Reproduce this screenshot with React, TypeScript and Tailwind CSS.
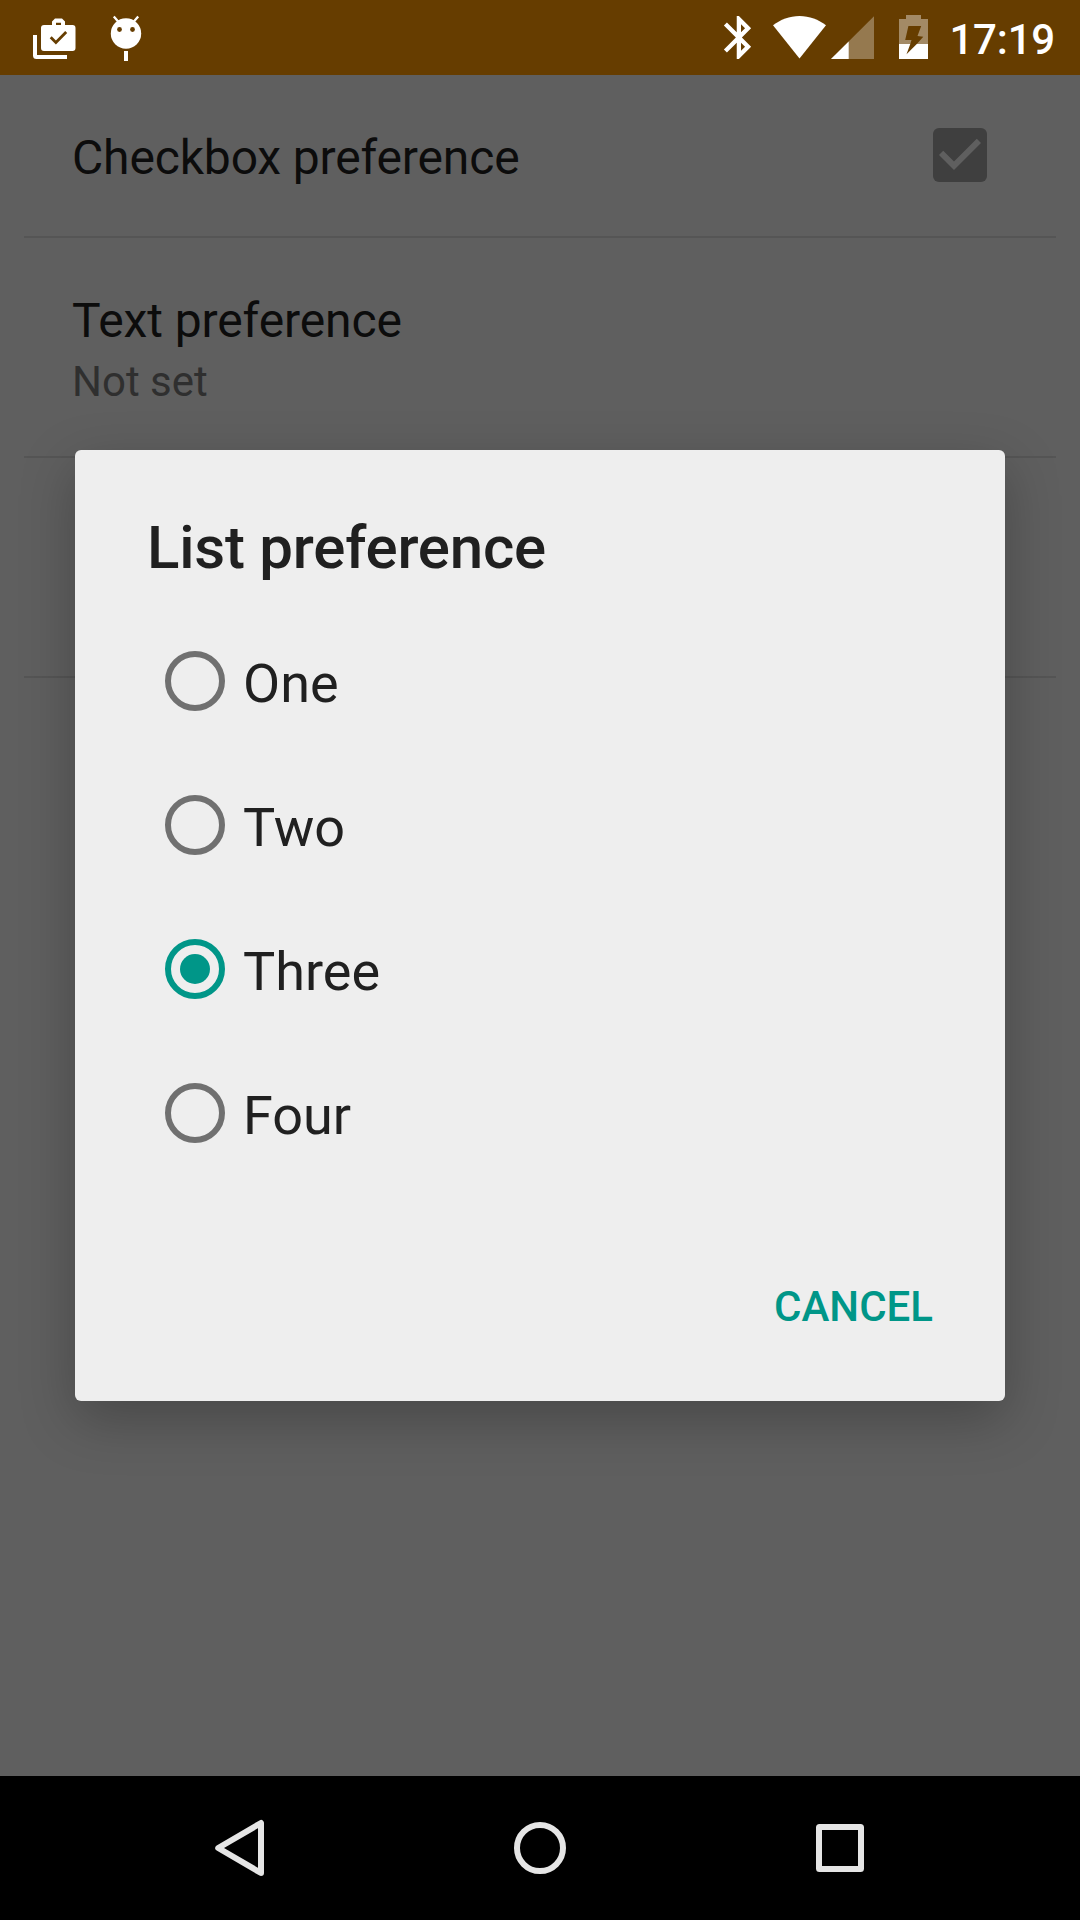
const WHITE = "#ffffff";

function StatusBar() {
  return (
    <header className="flex h-[75px] shrink-0 items-center justify-between bg-[#663d00] pl-[33px] pr-[25px] text-white">
      <div className="flex h-full items-start">
        <svg className="h-[75px] w-[43px]" viewBox="33 0 43 75">
          <path d="M33 35h4v20h30v4H36.500a3.500 3.500 0 0 1-3.500-3.500z" fill={WHITE} />
          <path
            fillRule="evenodd"
            d="M44 25h8v-3.500l3-3h7l3 3V25h7.500a3 3 0 0 1 3 3v20a3 3 0 0 1-3 3H44a3 3 0 0 1-3-3V28a3 3 0 0 1 3-3zM56 25h5v-2.300h-5z"
            fill={WHITE}
          />
          <path d="M50.700 37.200l5.200 5.200 10.300-10.500" fill="none" stroke="#663d00" strokeWidth="2.800" />
        </svg>
        <svg className="ml-[34px] h-[75px] w-[32px]" viewBox="110 0 32 75">
          <circle cx="126" cy="33.500" r="15.200" fill={WHITE} />
          <path d="M113.800 16.500l5.200 6M138.200 16.500l-5.200 6" stroke={WHITE} strokeWidth="2.300" />
          <circle cx="119.500" cy="29.500" r="2.400" fill="#663d00" />
          <circle cx="132.500" cy="29.500" r="2.400" fill="#663d00" />
          <path d="M124 51h4v10h-4z" fill={WHITE} />
        </svg>
      </div>
      <div className="flex h-full w-[335px] items-start justify-between">
        <svg className="h-[75px] w-[210px]" viewBox="720 0 210 75">
          <path
            transform="translate(713.200 11.800) scale(2.140)"
            fill={WHITE}
            d="M17.710 7.710L12 2h-1v7.590L6.410 5 5 6.410 10.590 12 5 17.590 6.410 19 11 14.410V22h1l5.710-5.710-4.300-4.290 4.300-4.290zM13 5.830l1.880 1.880L13 9.590V5.830zm1.880 10.460L13 18.170v-3.760l1.880 1.880z"
          />
          <path d="M773 25.300C780.500 19.600 789.500 16 799.500 16S818.500 19.600 826 25.300L799.500 58.600z" fill={WHITE} />
          <path d="M831 59L874 16.200V59z" fill={WHITE} fillOpacity="0.31" />
          <path d="M831 59L848.700 41.400V59z" fill={WHITE} />
          <path
            d="M899 44V19h7v-4h15v4h7v25h-11.200l6.500-7.300-5.800-.7 3.700-10h-12.800l-3.200 14h6.300l-1.200 4z"
            fill={WHITE}
            fillOpacity="0.4"
          />
          <path d="M899 44h11.300L906.500 54.300 916.800 44H928v15h-29z" fill={WHITE} />
        </svg>
        <span className="mt-[15px] text-[42px] font-medium leading-[50px] tracking-[-0.2px]">17:19</span>
      </div>
    </header>
  );
}

function Preferences() {
  return (
    <main className="flex flex-1 flex-col bg-[#5f5f5f] px-6 text-[#0c0c0c]">
      <div className="flex h-[163px] items-start justify-between border-b-2 border-[#555555] pl-12 pr-[60px]">
        <span className="mt-[55px] text-[48px] leading-[56px] tracking-[-0.15px]">Checkbox preference</span>
        <svg className="mt-[44px] size-[72px]" viewBox="0 0 24 24">
          <rect x="3" y="3" width="18" height="18" rx="2" fill="#3f3f3f" />
          <path d="M10 17l-5-5 1.410-1.410L10 14.170l7.590-7.590L19 8z" fill="#5f5f5f" />
        </svg>
      </div>
      <div className="flex h-[220px] flex-col border-b-2 border-[#555555] pl-12 pt-[55px]">
        <span className="text-[48px] leading-[56px] tracking-[-0.1px]">Text preference</span>
        <span className="mt-[8px] text-[42px] leading-[50px] text-[#2f2f2f]">Not set</span>
      </div>
      <div className="h-[220px] border-b-2 border-[#555555]" />
    </main>
  );
}

function Radio({ label, selected = false }: { label: string; selected?: boolean }) {
  return (
    <label className="flex h-[144px] items-center">
      <span
        className={
          selected
            ? "flex size-[60px] items-center justify-center rounded-full border-[6px] border-[#009688]"
            : "flex size-[60px] items-center justify-center rounded-full border-[6px] border-[#707070]"
        }
      >
        {selected && <span className="size-[30px] rounded-full bg-[#009688]" />}
      </span>
      <span className="ml-[18px] mt-[6px] text-[54px] leading-[64px]">{label}</span>
    </label>
  );
}

function ListDialog() {
  return (
    <section
      role="dialog"
      className="absolute left-[75px] top-[450px] flex h-[951px] w-[930px] flex-col rounded-[6px] bg-[#eeeeee] text-[#202020] shadow-[0_18px_54px_rgba(0,0,0,0.25)]"
    >
      <h1 className="ml-[72px] mt-[63px] text-[60px] font-medium leading-[70px] tracking-[-0.22px]">List preference</h1>
      <div className="ml-[90px] mt-[26px] flex flex-col">
        <Radio label="One" />
        <Radio label="Two" />
        <Radio label="Three" selected />
        <Radio label="Four" />
      </div>
      <button className="mr-[72px] mt-[97px] self-end text-[42px] font-medium leading-[50px] text-[#009688]">
        CANCEL
      </button>
    </section>
  );
}

function NavigationBar() {
  return (
    <nav className="z-10 flex h-36 shrink-0 items-center justify-between bg-black px-[204px]">
      <svg className="size-[72px]" viewBox="204 1812 72 72" fill="none" stroke="#e5e5e5" strokeWidth="6" strokeLinejoin="round">
        <path d="M261 1823V1873L218.200 1848z" />
      </svg>
      <svg className="size-[72px]" viewBox="0 0 72 72" fill="none" stroke="#e5e5e5" strokeWidth="6">
        <circle cx="36" cy="36" r="23" />
      </svg>
      <svg className="size-[72px]" viewBox="0 0 72 72" fill="none" stroke="#e5e5e5" strokeWidth="6" strokeLinejoin="round">
        <rect x="15" y="15" width="42" height="42" rx="0.500" />
      </svg>
    </nav>
  );
}

export default function App() {
  return (
    <div className="relative flex h-[1920px] w-[1080px] flex-col overflow-hidden font-[Roboto,sans-serif]">
      <StatusBar />
      <Preferences />
      <ListDialog />
      <NavigationBar />
    </div>
  );
}
